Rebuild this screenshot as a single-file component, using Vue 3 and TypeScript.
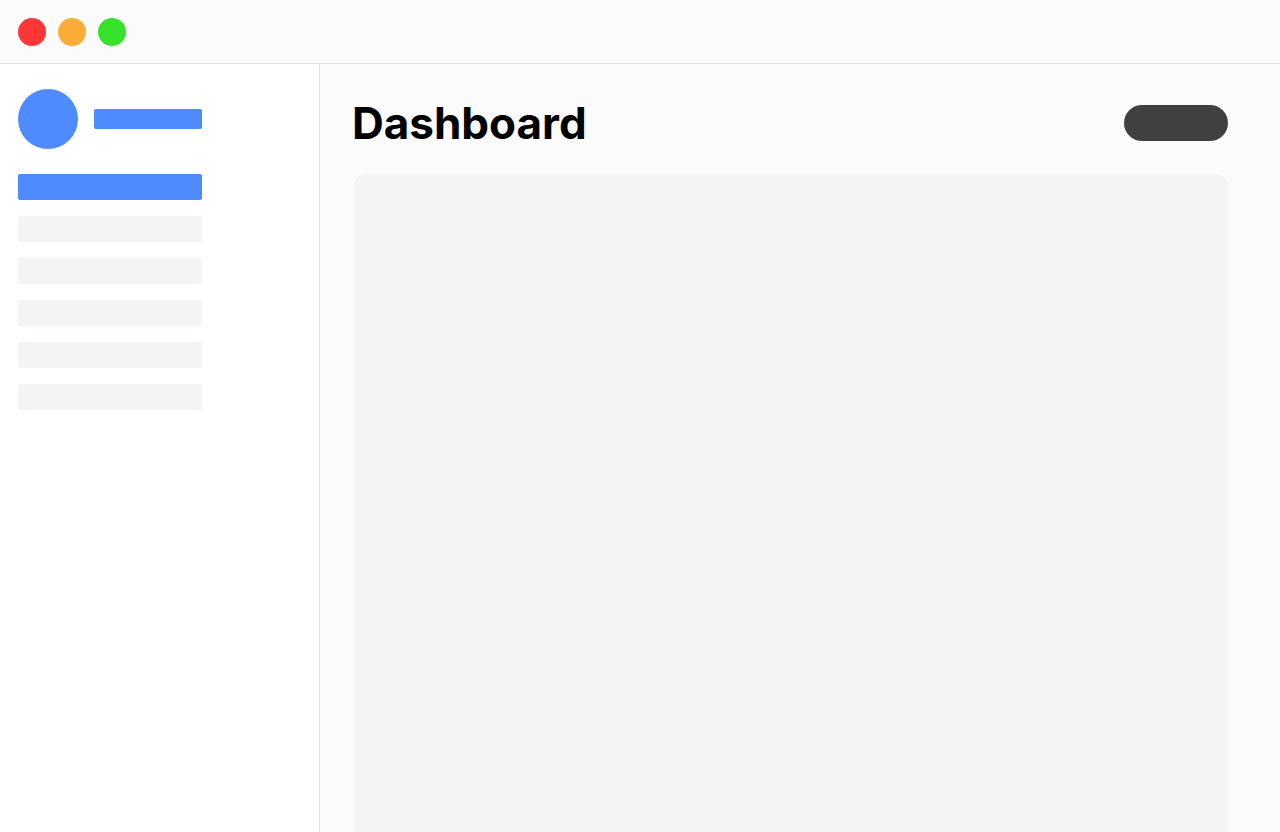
<script setup lang="ts">
import { ref } from 'vue'

const controls: { name: string; tone: string }[] = [
  { name: 'Close', tone: 'close' },
  { name: 'Minimize', tone: 'minimize' },
  { name: 'Zoom', tone: 'zoom' },
]
const items: number[] = [1, 2, 3, 4, 5, 6]
const active = ref<number>(1)
</script>

<template>
  <div class="window">
    <header class="titlebar">
      <button
        v-for="control in controls"
        :key="control.tone"
        type="button"
        class="dot"
        :class="control.tone"
        :aria-label="control.name"
      ></button>
    </header>
    <div class="body">
      <aside class="sidebar">
        <div class="profile">
          <div class="avatar"></div>
          <div class="username"></div>
        </div>
        <nav class="menu" aria-label="Main">
          <button
            v-for="item in items"
            :key="item"
            type="button"
            class="item"
            :class="{ active: item === active }"
            :aria-label="`Section ${item}`"
            @click="active = item"
          ></button>
        </nav>
      </aside>
      <main class="content">
        <div class="heading">
          <h1>Dashboard</h1>
          <button type="button" class="action" aria-label="Action"></button>
        </div>
        <section class="panel"></section>
      </main>
    </div>
  </div>
</template>

<style>
body {
  margin: 0;
}
</style>

<style scoped>
.window {
  display: flex;
  flex-direction: column;
  min-height: 100vh;
  background: #fbfbfb;
  font-family: Inter, "Liberation Sans", sans-serif;
}
button {
  padding: 0;
  border: 0;
  cursor: pointer;
}
.titlebar {
  display: flex;
  align-items: center;
  gap: 12px;
  padding: 18px 18px 17px;
  border-bottom: 1px solid #e2e2e2;
}
.dot {
  width: 28px;
  height: 28px;
  border-radius: 50%;
}
.close {
  background: #fe3636;
}
.minimize {
  background: #fcac38;
}
.zoom {
  background: #36e32a;
}
.body {
  flex: 1;
  display: flex;
}
.sidebar {
  box-sizing: border-box;
  flex: none;
  width: 320px;
  padding: 25px 18px;
  border-right: 1px solid #e2e2e2;
  background: #fff;
}
.profile {
  display: flex;
  align-items: center;
  gap: 16px;
  margin-bottom: 25px;
}
.avatar {
  width: 60px;
  height: 60px;
  border-radius: 50%;
  background: #4d8bff;
}
.username {
  width: 108px;
  height: 20px;
  border-radius: 2px;
  background: #4d8bff;
}
.menu {
  display: flex;
  flex-direction: column;
  gap: 16px;
  width: 184px;
}
.item {
  height: 26px;
  border-radius: 2px;
  background: #f5f3f4;
}
.item.active {
  background: #4d8bff;
}
.content {
  flex: 1;
  display: flex;
  flex-direction: column;
}
.heading {
  display: flex;
  align-items: center;
  justify-content: space-between;
  padding: 32px 52px 24px 32px;
}
h1 {
  margin: 0;
  font-size: 44px;
  font-weight: 700;
  line-height: 54px;
  color: #000;
}
.action {
  width: 104px;
  height: 36px;
  border-radius: 18px;
  background: #404040;
}
.panel {
  flex: 1;
  margin: 0 52px 0 34px;
  border-radius: 12px 12px 0 0;
  background: #f5f3f4;
}
</style>
